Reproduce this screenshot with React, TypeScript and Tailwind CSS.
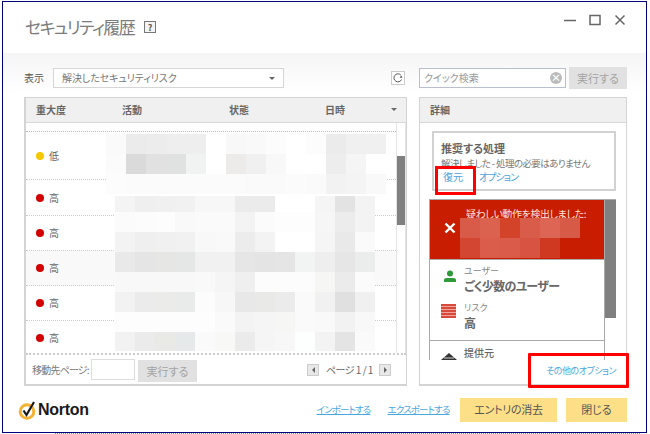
import React from "react";

const JP = { fontFamily: '"Noto Sans CJK JP", sans-serif', fontFeatureSettings: '"palt"' };

const leftMosaicTop = [
  ["#fafafa", "#ebebeb", "#ececec", "#eeeeee", "#eeeeee", "#ffffff", "#f8f8f8", "#f9f9f9", "#fcfcfc", "#ffffff", "#fcfcfc", "#ebebeb", "#f0f0f0", "#f0f0f0"],
  ["#fbfbfb", "#dadada", "#e1e1e1", "#e0e1e1", "#f1f3f3", "#ffffff", "#ecebea", "#f0f0f0", "#f8f8f8", "#ffffff", "#ffffff", "#ededed", "#f5f5f5", "#ffffff"],
  ["#fcfcfc", "#fbfbfb", "#fbfbfb", "#fbfbfb", "#fbfbfb", "#fbfbfb", "#fbfbfb", "#fafafa", "#fafafa", "#fbfbfb", "#fafafa", "#f2f2f2", "#f4f4f4", "#f9f9f9"],
];

const leftMosaicBottom = [
  ["#f4f4f4", "#efefef", "#f0f0f0", "#f1f1f1", "#f7f7f7", "#f7f7f7", "#ebebeb", "#ebebeb", "#ffffff", "#ffffff", "#f5f5f5", "#e3e3e3", "#f3f3f3"],
  ["#fbfbfb", "#fcfcfc", "#fdfdfd", "#f9f9f9", "#fafafa", "#fafafa", "#f3f3f3", "#fbfbfb", "#fdfdfd", "#fdfdfd", "#f6f6f6", "#ececec", "#f3f3f3"],
  ["#f3f3f3", "#efefef", "#f0f0f0", "#f1f1f1", "#f8f8f8", "#f9f9f9", "#ececec", "#f3f3f3", "#ffffff", "#ffffff", "#f5f5f5", "#e9e9e9", "#fafafa"],
  ["#e9e9e9", "#e5e5e5", "#e6e6e4", "#e5e7e7", "#f1f1f1", "#f1f1f1", "#e6e6e6", "#e4e4e4", "#e5e5e5", "#f2f3f3", "#eeeeee", "#e6e6e6", "#ebeded"],
  ["#f8f8f8", "#f8f8f8", "#f8f8f8", "#f8f8f8", "#f9f9f9", "#f5f5f5", "#efefef", "#fcfcfc", "#fcfcfc", "#fcfcfc", "#f6f6f5", "#ebebeb", "#fbfbfb"],
  ["#f2f2f2", "#ebebeb", "#ebebe9", "#e9ebeb", "#fcfcfc", "#f7f7f7", "#e8e8e8", "#e9e9e8", "#ebebeb", "#fafafa", "#f1f1f1", "#e0e0e0", "#f0f0f0"],
  ["#fdfdfd", "#fdfdfd", "#fdfdfd", "#fdfdfd", "#fdfdfd", "#fafafa", "#f3f3f3", "#f5f5f5", "#f6f6f5", "#fafafa", "#f9f9f9", "#f2f2f2", "#f8f8f8"],
  ["#f2f2f2", "#ebebeb", "#e9e9e6", "#e6e9e9", "#fafafa", "#f8f8f6", "#ebebeb", "#f5f5f5", "#f7f7f7", "#fdfefe", "#f3f3f3", "#e4e4e4", "#fafafa"],
];

const redMosaic = [
  ["#d85a48", "#dc6250", "#d24329", "#d95c4a", "#dc6554", "#d75a46"],
  ["#d24632", "#da5d4b", "#da5b4a", "#d75443", "#cf3821"],
];

const rows = [
  { label: "低", color: "bg-[#f3c800]", h: "h-[48px]", alt: false },
  { label: "高", color: "bg-[#d40000]", h: "h-[36px]", alt: false },
  { label: "高", color: "bg-[#d40000]", h: "h-[35px]", alt: false },
  { label: "高", color: "bg-[#d40000]", h: "h-[35px]", alt: true },
  { label: "高", color: "bg-[#d40000]", h: "h-[35px]", alt: false },
  { label: "高", color: "bg-[#d40000]", h: "h-[35px]", alt: false },
];

function Mosaic({ cells, cellH }: { cells: string[][]; cellH: number[] }) {
  return (
    <div className="flex flex-col">
      {cells.map((row, i) => (
        <div key={i} className="flex">
          {row.map((c, j) => (
            <div key={j} className="w-[20px]" style={{ height: cellH[i], backgroundColor: c }} />
          ))}
        </div>
      ))}
    </div>
  );
}

function GrayButton({ w, h }: { w: string; h: string }) {
  return (
    <button className={`${w} ${h} shrink-0 bg-[#e1e1e1] text-[11px] text-[#a3a3a3]`} style={JP}>
      実行する
    </button>
  );
}

function NortonLogo() {
  return (
    <div className="flex items-center">
      <svg width="20" height="22" viewBox="0 0 20 22" className="shrink-0">
        <circle cx="9" cy="12.5" r="6.8" fill="none" stroke="#f6b333" strokeWidth="3" />
        <path d="M5.5 11.5 L8.5 16 L16 3" fill="none" stroke="#1a1a1a" strokeWidth="2.2" />
      </svg>
      <span className="text-[16px] font-bold leading-none tracking-[-0.3px] text-[#1a1a1a] [font-family:'Liberation_Sans',sans-serif]">
        Norton
      </span>
    </div>
  );
}

export default function App() {
  return (
    <div className="relative h-[434px] w-[650px] overflow-hidden bg-white pl-[2px] pt-[1px] text-[#666]" style={JP}>
      <div className="flex h-[432px] w-[645px] flex-col border border-[#00007f] bg-white">
        {/* title bar */}
        <div className="flex h-[51px] shrink-0 items-start justify-between pl-[22px] pr-[20px]">
          <div className="flex items-center pt-[13px]">
            <span className="whitespace-nowrap text-[17px] leading-[24px] tracking-[-1.6px] text-[#7b7b7b]">セキュリティ履歴</span>
            <span className="ml-[10px] flex h-[12px] w-[12px] items-center justify-center border border-[#777] bg-[#f4f4f4] text-[9px] font-bold leading-none text-[#555]">
              ?
            </span>
          </div>
          <div className="flex items-center gap-[13px] pt-[12px]">
            <svg width="12" height="12" viewBox="0 0 12 12"><path d="M0 6.5H12" stroke="#666" strokeWidth="1.5" /></svg>
            <svg width="12" height="12" viewBox="0 0 12 12"><rect x="1" y="1.5" width="10" height="9" fill="none" stroke="#666" strokeWidth="1.5" /></svg>
            <svg width="12" height="12" viewBox="0 0 12 12"><path d="M1.5 1.5L10.5 10.5M10.5 1.5L1.5 10.5" stroke="#666" strokeWidth="1.5" /></svg>
          </div>
        </div>

        {/* body */}
        <div className="flex flex-1 gap-[12px] bg-gradient-to-b from-[#f5f5f5] to-white to-[40px] pl-[21px] pt-[14px]">
          {/* left column */}
          <div className="flex w-[383px] flex-col">
            <div className="flex h-[22px] items-center">
              <span className="w-[29px] pb-[1px] text-[10px] text-[#555]">表示</span>
              <div className="flex h-[20px] w-[231px] items-center justify-between border border-[#d6d6d6] bg-white pl-[8px] pr-[8px]">
                <span className="pb-[1px] text-[10px] tracking-[-0.1px] text-[#777]">解決したセキュリティリスク</span>
                <span className="h-0 w-0 border-x-[3px] border-t-[3px] border-x-transparent border-t-[#666]" />
              </div>
              <div className="ml-auto mr-[2px] flex h-[14px] w-[14px] items-center justify-center border border-[#ccc] bg-white">
                <svg width="10" height="10" viewBox="0 0 10 10">
                  <path d="M8.6 6.5A4 4 0 1 1 7.8 2" fill="none" stroke="#555" strokeWidth="1" />
                  <path d="M9.5 4.8L6.6 4.8L8.2 2.6Z" fill="#555" />
                </svg>
              </div>
            </div>

            <div className="mt-[8px] flex h-[289px] flex-col border border-[#d4d4d4] border-b-2 border-l-2 bg-white">
              <div className="flex h-[25px] shrink-0 items-center border-b border-[#d8d8d8] bg-[#f0f0f0] pb-[1px] text-[10px] font-bold text-[#666]">
                <span className="w-[96px] pl-[10px]">重大度</span>
                <span className="w-[107px]">活動</span>
                <span className="w-[96px]">状態</span>
                <span className="flex-1">日時</span>
                <span className="mr-[9px] h-0 w-0 border-x-[3px] border-t-[3px] border-x-transparent border-t-[#666]" />
              </div>

              <div className="relative flex h-[232px] shrink-0 border-b-2 border-dotted border-[#ccc]">
                <div className="flex-1 overflow-hidden">
                  <div className="h-[9px] border-b border-dotted border-[#bbb] text-center" />
                  {rows.map((row, i) => (
                    <div
                      key={i}
                      className={`flex ${row.h} items-center gap-[5px] border-b border-dotted border-[#ccc] pl-[10px] ${row.alt ? "bg-[#f9f9f9]" : "bg-white"}`}
                    >
                      <span className={`h-[8px] w-[8px] rounded-full ${row.color}`} />
                      <span className="text-[10px] leading-none">{row.label}</span>
                    </div>
                  ))}
                </div>
                <div className="w-[10px] shrink-0 border-x border-[#e4e4e4] bg-white pt-[33px]">
                  <div className="h-[69px] bg-[#808080]" />
                </div>
                <div className="absolute left-[80px] top-[11px]">
                  <Mosaic cells={leftMosaicTop} cellH={[20, 20, 20]} />
                </div>
                <div className="absolute left-[89px] top-[73px]">
                  <Mosaic cells={leftMosaicBottom} cellH={[16, 20, 20, 20, 20, 20, 20, 19]} />
                </div>
              </div>

              <div className="flex flex-1 items-center pl-[6px] pr-[15px]">
                <span className="w-[59px] overflow-hidden whitespace-nowrap text-[10px] tracking-[-0.8px] text-[#777]">移動先ページ:</span>
                <div className="h-[21px] w-[44px] border border-[#ddd] bg-white" />
                <div className="ml-[3px]"><GrayButton w="w-[59px]" h="h-[22px]" /></div>
                <div className="ml-auto flex items-center">
                  <span className="flex h-[12px] w-[12px] items-center justify-center border border-[#ccc] bg-[#e8e8e8]">
                    <span className="h-0 w-0 border-y-[3px] border-r-[3px] border-y-transparent border-r-[#666]" />
                  </span>
                  <span className="ml-[7px] w-[53px] whitespace-nowrap text-[10px] tracking-[-0.5px] text-[#666]">ページ 1 / 1</span>
                  <span className="flex h-[12px] w-[12px] items-center justify-center border border-[#ccc] bg-[#e8e8e8]">
                    <span className="h-0 w-0 border-y-[3px] border-l-[3px] border-y-transparent border-l-[#666]" />
                  </span>
                </div>
              </div>
            </div>
          </div>

          {/* right column */}
          <div className="flex w-[208px] flex-col">
            <div className="flex h-[22px] items-center justify-between">
              <div className="flex h-[20px] w-[147px] items-center justify-between border border-[#b9bfcc] bg-white pl-[4px] pr-[3px]">
                <span className="pb-[1px] text-[10px] text-[#999]">クイック検索</span>
                <span className="flex h-[12px] w-[12px] items-center justify-center rounded-full bg-[#bbb] text-[10px] font-bold leading-none text-white">×</span>
              </div>
              <GrayButton w="w-[58px]" h="h-[22px]" />
            </div>

            <div className="relative mt-[8px] flex h-[289px] flex-col border border-[#d4d4d4] border-b-2 bg-white">
              <div className="flex h-[25px] shrink-0 items-center border-b border-[#d8d8d8] bg-[#f0f0f0] pb-[1px] pl-[10px] text-[10px] font-bold text-[#666]">
                詳細
              </div>
              <div className="ml-[12px] mt-[8px] flex h-[60px] w-[184px] shrink-0 flex-col border-2 border-[#d2d2d2] bg-white pl-[7px]">
                <span className="mt-[8px] text-[11px] font-bold leading-[14px] text-[#666]">推奨する処理</span>
                <span className="mt-[1px] whitespace-nowrap text-[9.5px] leading-[14px] tracking-[-0.6px] text-[#777]">解決しました - 処理の必要はありません</span>
                <div className="flex text-[10px] leading-[14px] text-[#4aa3dc]">
                  <span className="ml-[2px] w-[36px]">復元</span>
                  <span className="tracking-[-1px]">オプション</span>
                </div>
              </div>

              <div className="ml-[9px] mt-[8px] flex h-[161px] w-[187px] shrink-0 overflow-hidden border-t border-[#aaa]">
                <div className="w-[176px] shrink-0 border-x border-[#aaa]">
                  <div className="relative h-[59px] bg-[#c91d00] pl-[36px] pt-[6px] text-white">
                    <span className="block whitespace-nowrap text-[10px] leading-[15px] tracking-[-0.4px] text-[#fbe4df]">疑わしい動作を検出しました:</span>
                    <svg width="12" height="12" viewBox="0 0 12 12" className="absolute left-[14px] top-[22px]">
                      <path d="M1.5 1.5L10.5 10.5M10.5 1.5L1.5 10.5" stroke="#fff" strokeWidth="2.4" />
                    </svg>
                    <div className="absolute left-[30px] top-[18px]">
                      <Mosaic cells={redMosaic} cellH={[20, 20]} />
                    </div>
                  </div>
                  <div className="h-[82px] border-y border-[#aaa] pl-[34px]">
                    <div className="relative pt-[5px]">
                      <svg width="12" height="13" viewBox="0 0 12 13" className="absolute -left-[20px] top-[10px]">
                        <circle cx="6" cy="3.5" r="3" fill="#2e9a3a" />
                        <path d="M0 12 V10 Q0 8 3 8 H9 Q12 8 12 10 V12 Z" fill="#2e9a3a" />
                      </svg>
                      <div className="text-[9px] leading-[12px] text-[#888]">ユーザー</div>
                      <div className="whitespace-nowrap text-[12px] font-bold leading-[17px] tracking-[-0.7px] text-[#666]">ごく少数のユーザー</div>
                    </div>
                    <div className="relative pt-[8px]">
                      <div className="absolute -left-[23px] top-[10px] flex h-[14px] w-[15px] flex-col justify-between bg-[#f0a59c]">
                        {[0, 1, 2, 3, 4].map((i) => (
                          <span key={i} className="h-[2px] w-full bg-[#d84a3a]" />
                        ))}
                      </div>
                      <div className="text-[9px] leading-[12px] text-[#888]">リスク</div>
                      <div className="text-[12px] font-bold leading-[17px] text-[#666]">高</div>
                    </div>
                  </div>
                  <div className="relative pl-[34px] pt-[5px]">
                    <svg width="16" height="10" viewBox="0 0 16 10" className="absolute left-[11px] top-[11px]">
                      <path d="M0 8 L8 1 L16 8 Z" fill="#333" />
                      <path d="M3 6 L13 6" stroke="#fff" strokeWidth="0.8" />
                    </svg>
                    <div className="text-[10px] font-medium leading-[14px] text-[#666]">提供元</div>
                  </div>
                </div>
                <div className="flex-1 bg-white">
                  <div className="h-[118px] bg-[#808080]" />
                </div>
              </div>

              <div className="flex flex-1 items-center justify-end pb-[2px] pr-[10px] text-[9px] tracking-[-0.45px] text-[#4aa8e0]">
                その他のオプション
              </div>
            </div>
          </div>
        </div>

        {/* footer */}
        <div className="flex h-[47px] shrink-0 items-center pl-[15px] pr-[19px]">
          <NortonLogo />
          <div className="ml-[228px] flex items-center gap-[17px] text-[9.5px] tracking-[-0.85px] text-[#4aa8e0] underline">
            <span>インポートする</span>
            <span>エクスポートする</span>
          </div>
          <button className="ml-auto h-[24px] w-[97px] bg-[#fddf88] text-[11px] tracking-[-0.3px] text-[#555]" style={JP}>
            エントリの消去
          </button>
          <button className="ml-[9px] h-[24px] w-[61px] bg-[#fddf88] text-[11px] text-[#555]" style={JP}>
            閉じる
          </button>
        </div>
      </div>

      {/* red annotation boxes */}
      <div className="absolute left-[435px] top-[166px] h-[29px] w-[41px] border-[3px] border-[#f00]" />
      <div className="absolute left-[528px] top-[353px] h-[35px] w-[101px] rounded-[1px] border-[3px] border-[#f00]" />
      {/* text of the page behind the window, showing below its lower edge */}
      <div className="absolute bottom-0 left-[55px] right-[10px] border-b border-dotted border-[#888]" />
    </div>
  );
}
